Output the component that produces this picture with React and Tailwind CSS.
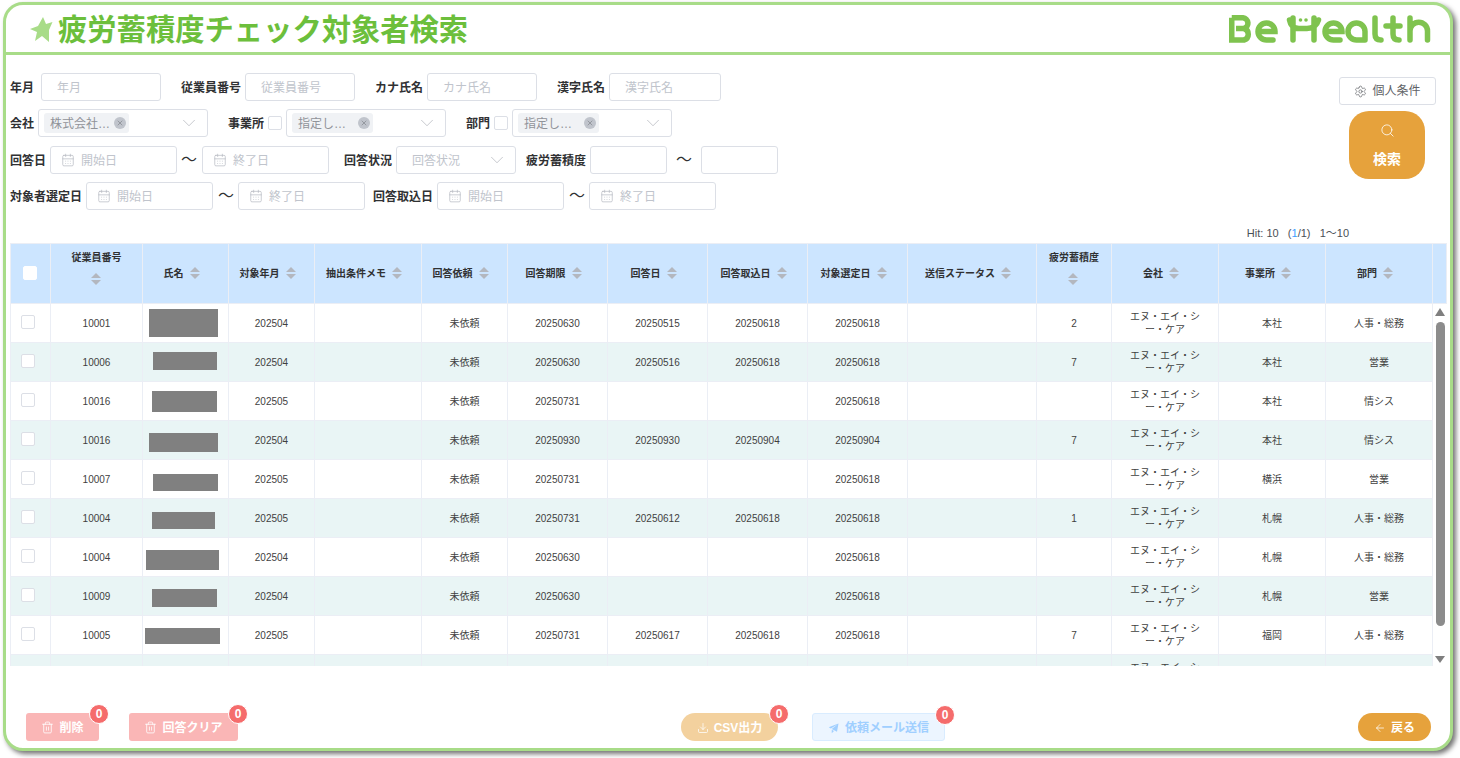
import { ArrowLeft, CalendarDays, ChevronDown, Download, Search, Settings, Trash2, X } from "lucide-react";

const cols = [
  { w: "w-[41px]" },
  { w: "w-[92px]", label: "従業員番号", stack: true },
  { w: "w-[86px]", label: "氏名" },
  { w: "w-[86px]", label: "対象年月" },
  { w: "w-[107px]", label: "抽出条件メモ" },
  { w: "w-[86px]", label: "回答依頼" },
  { w: "w-[100px]", label: "回答期限" },
  { w: "w-[100px]", label: "回答日" },
  { w: "w-[100px]", label: "回答取込日" },
  { w: "w-[100px]", label: "対象選定日" },
  { w: "w-[129px]", label: "送信ステータス" },
  { w: "w-[75px]", label: "疲労蓄積度", stack: true },
  { w: "w-[107px]", label: "会社" },
  { w: "w-[107px]", label: "事業所" },
  { w: "w-[107px]", label: "部門" },
];

// name cells are blacked out in the source, so each block keeps its own size
const rows = [
  { id: "10001", mask: "w-[69px] h-[28px] -translate-x-[2px]", ym: "202504", limit: "20250630", ans: "20250515", imp: "20250618", sel: "20250618", score: "2", office: "本社", dept: "人事・総務" },
  { id: "10006", mask: "w-[64px] h-[18px] -translate-x-[1px] -translate-y-[1px]", ym: "202504", limit: "20250630", ans: "20250516", imp: "20250618", sel: "20250618", score: "7", office: "本社", dept: "営業" },
  { id: "10016", mask: "w-[65px] h-[21px] -translate-x-[1px] translate-y-[1px]", ym: "202505", limit: "20250731", ans: "", imp: "", sel: "20250618", score: "", office: "本社", dept: "情シス" },
  { id: "10016", mask: "w-[69px] h-[19px] -translate-x-[2px] translate-y-[3px]", ym: "202504", limit: "20250930", ans: "20250930", imp: "20250904", sel: "20250904", score: "7", office: "本社", dept: "情シス" },
  { id: "10007", mask: "w-[65px] h-[17px] translate-y-[4px]", ym: "202505", limit: "20250731", ans: "", imp: "", sel: "20250618", score: "", office: "横浜", dept: "営業" },
  { id: "10004", mask: "w-[63px] h-[17px] -translate-x-[2px] translate-y-[3px]", ym: "202505", limit: "20250731", ans: "20250612", imp: "20250618", sel: "20250618", score: "1", office: "札幌", dept: "人事・総務" },
  { id: "10004", mask: "w-[73px] h-[20px] -translate-x-[3px] translate-y-[3px]", ym: "202504", limit: "20250630", ans: "", imp: "", sel: "20250618", score: "", office: "札幌", dept: "人事・総務" },
  { id: "10009", mask: "w-[65px] h-[18px] -translate-x-[1px] translate-y-[2px]", ym: "202504", limit: "20250630", ans: "", imp: "", sel: "20250618", score: "", office: "札幌", dept: "営業" },
  { id: "10005", mask: "w-[75px] h-[16px] -translate-x-[3px] translate-y-[1px]", ym: "202505", limit: "20250731", ans: "20250617", imp: "20250618", sel: "20250618", score: "7", office: "福岡", dept: "人事・総務" },
  { id: "", mask: "", ym: "", limit: "", ans: "", imp: "", sel: "", score: "", office: "", dept: "", clipped: true },
];

const fieldBox = "flex items-center h-7 bg-white border border-[#dcdfe6] rounded-[3px] text-xs text-[#c0c4cc]";

function Label({ className = "", children }) {
  return <span className={`pt-[2px] text-xs font-bold text-[#303133] whitespace-nowrap ${className}`}>{children}</span>;
}

function TextField({ className = "", placeholder = "" }) {
  return (
    <input
      placeholder={placeholder}
      className={`h-7 px-[15px] pt-[2px] bg-white border border-[#dcdfe6] rounded-[3px] text-xs outline-none placeholder:text-[#c0c4cc] ${className}`}
    />
  );
}

function DateField({ className = "", placeholder }) {
  return (
    <div className={`${fieldBox} w-[127px] pl-[10px] ${className}`}>
      <CalendarDays size={14} strokeWidth={1.2} className="text-[#b4b8c0]" />
      <span className="ml-[6px] pt-[2px]">{placeholder}</span>
    </div>
  );
}

function Tilde({ className = "" }) {
  return <span className={`w-4 text-base leading-none text-[#303133] ${className}`}>〜</span>;
}

function CheckBox({ className = "" }) {
  return <span className={`block w-[14px] h-[14px] bg-white border border-[#dcdfe6] rounded-[2px] ${className}`} />;
}

function SelectField({ className = "", tag, tagWidth = "w-[85px]", placeholder }) {
  return (
    <div className={`${fieldBox} justify-between pl-[5px] pr-[7px] ${className}`}>
      {tag ? (
        <span className={`flex items-center justify-between h-5 pl-[6px] pr-[2px] bg-[#f0f2f5] rounded-[3px] text-[#909399] ${tagWidth}`}>
          <span className="pt-[2px]">{tag}</span>
          <span className="flex items-center justify-center w-3 h-3 mr-[1px] rounded-full bg-[#c0c4cc]">
            <X size={8} strokeWidth={1.5} className="text-[#6b6e75]" />
          </span>
        </span>
      ) : (
        <span className="pl-[10px] pt-[2px]">{placeholder}</span>
      )}
      <ChevronDown size={22} strokeWidth={0.7} className="text-[#a8abb2]" />
    </div>
  );
}

function SortCaret() {
  return (
    <span className="flex flex-col items-center justify-center gap-[2px] w-6 pr-[2px]">
      <span className="w-0 h-0 border-x-[5px] border-x-transparent border-b-[5px] border-b-[#b3b7bf]" />
      <span className="w-0 h-0 border-x-[5px] border-x-transparent border-t-[5px] border-t-[#b3b7bf]" />
    </span>
  );
}

function Badge({ className = "-right-[10px]" }) {
  return (
    <span className={`absolute -top-[9px] flex items-center justify-center w-5 h-5 rounded-full bg-[#f56c6c] border border-white text-xs font-bold text-white ${className}`}>
      0
    </span>
  );
}

function Logo() {
  return (
    <svg viewBox="0 0 202 28" className="w-[202px] h-7" fill="none" stroke="#7fc34f" strokeWidth="5.5">
      <path d="M2.75 2.75V25H15A6 6 0 0 0 15 13.5H7M15 13.5A5.5 5.5 0 0 0 14 2.75H2.75" />
      <g strokeLinecap="round">
        <path d="M29 16.5H46A8.5 8.5 0 1 0 37.5 25H44" />
        <path d="M60.5 5Q62 13.5 70 13.5H78Q87 13.5 89.5 5M64 3V25M85 3V25" />
        <path d="M96 16.5H113A8.5 8.5 0 1 0 104.5 25H111" />
        <path d="M136 25V16.5A8.5 8.5 0 1 0 127.5 25H136" />
        <path d="M146 3V19Q146 25 152 25" />
        <path d="M164 3V19Q164 25 170 25M157 11H171" />
        <path d="M181 3V25M181 16A8.5 8.5 0 0 1 198.5 16V25" />
      </g>
      <circle cx="71.5" cy="5" r="1.8" fill="#7fc34f" stroke="none" />
      <circle cx="77" cy="5" r="1.8" fill="#7fc34f" stroke="none" />
    </svg>
  );
}

function PlaneIcon() {
  return (
    <svg viewBox="0 0 1024 1024" className="w-3 h-3" fill="currentColor">
      <path d="m64 448 832-320-128 704-446.08-243.328L832 192 242.816 545.472zm256 512V657.024L512 768z" />
    </svg>
  );
}

function ColGroup({ gutter }) {
  return (
    <colgroup>
      {cols.map((c, i) => (
        <col key={i} className={c.w} />
      ))}
      {gutter && <col className="w-[14px]" />}
    </colgroup>
  );
}

function TableHead() {
  return (
    <table className="table-fixed border-separate border-spacing-0 w-[1437px]">
      <ColGroup gutter />
      <thead>
        <tr>
          {cols.map((c, i) => (
            <th key={i} className="h-[61px] p-0 bg-[#cce5ff] border-r border-y border-[#ebeef5] first:border-l text-[10px] font-bold text-[#303133]">
              {i === 0 ? (
                <CheckBox className="mx-auto -translate-x-[1px] border-white" />
              ) : (
                <div className={`flex items-center justify-center ${c.stack ? "flex-col gap-2 pb-3" : ""}`}>
                  <span className="whitespace-nowrap">{c.label}</span>
                  <SortCaret />
                </div>
              )}
            </th>
          ))}
          <th className="bg-[#cce5ff] border-r border-y border-[#ebeef5]" />
        </tr>
      </thead>
    </table>
  );
}

function Cell({ children, className = "pt-[2px]" }) {
  return <td className={`h-[39px] p-0 border-r border-b border-[#ebeef5] first:border-l text-center text-[10px] text-[#3f3f3f] ${className}`}>{children}</td>;
}

function TableBody() {
  return (
    <div className="flex">
      <div className="w-[1423px] h-[362px] overflow-hidden">
        <table className="table-fixed border-separate border-spacing-0 w-[1423px]">
          <ColGroup />
          <tbody>
            {rows.map((r, i) => (
              <tr key={i} className={i % 2 === 1 ? "bg-[#e9f5f5]" : "bg-white"}>
                <Cell className="">{!r.clipped && <CheckBox className="ml-[10px] -translate-y-[1px]" />}</Cell>
                <Cell>{r.id}</Cell>
                <Cell className="">{r.mask && <span className={`block mx-auto bg-[#808080] ${r.mask}`} />}</Cell>
                <Cell>{r.ym}</Cell>
                <Cell />
                <Cell>{r.clipped ? "" : "未依頼"}</Cell>
                <Cell>{r.limit}</Cell>
                <Cell>{r.ans}</Cell>
                <Cell>{r.imp}</Cell>
                <Cell>{r.sel}</Cell>
                <Cell />
                <Cell>{r.score}</Cell>
                <Cell className="leading-[13px]">
                  エヌ・エイ・シ
                  <br />
                  ー・ケア
                </Cell>
                <Cell>{r.office}</Cell>
                <Cell>{r.dept}</Cell>
              </tr>
            ))}
          </tbody>
        </table>
      </div>
      <div className="flex flex-col items-center w-[14px] h-[362px] pt-1 bg-white">
        <span className="w-0 h-0 border-x-[5px] border-x-transparent border-b-[8px] border-b-[#7f7f7f]" />
        <span className="w-[9px] h-[304px] mt-[6px] rounded-full bg-[#8c8c8c]" />
        <span className="w-0 h-0 mt-[30px] border-x-[5px] border-x-transparent border-t-[7px] border-t-[#7f7f7f]" />
      </div>
    </div>
  );
}

export default function App() {
  return (
    <div className="w-[1460px] h-[758px] bg-white pt-[2px] pl-[3px] overflow-hidden font-['Liberation_Sans','Noto_Sans_CJK_JP',sans-serif]">
      <div className="flex flex-col w-[1450px] h-[749px] bg-white border-[3px] border-[#a8dc88] rounded-[20px] shadow-[3px_3px_5px_rgba(0,0,0,0.55)]">
        <header className="flex items-center justify-between shrink-0 h-[50px] pl-[24px] pr-[19px] border-b-[3px] border-[#a8dc88]">
          <div className="flex items-center gap-[5px]">
            <svg viewBox="0 0 23 25" className="w-[23px] h-[25px] mt-[3px]" fill="#a8dc88">
              <path d="M13 0L16 7L22.5 5L19 13L19 25L12 19L5 24L7 15L0 12L8 9Z" />
            </svg>
            <h1 className="pt-[2px] text-[29.3px] leading-none font-bold text-[#6cbf3c]">疲労蓄積度チェック対象者検索</h1>
          </div>
          <Logo />
        </header>

        <div className="flex pl-[4px] pt-[18px] pr-[14px]">
          <div className="flex flex-col gap-[8.33px]">
            <div className="flex items-center h-7">
              <Label>年月</Label>
              <TextField className="ml-[7px] w-[120px]" placeholder="年月" />
              <Label className="ml-5">従業員番号</Label>
              <TextField className="ml-1 w-[110px]" placeholder="従業員番号" />
              <Label className="ml-5">カナ氏名</Label>
              <TextField className="ml-1 w-[110px]" placeholder="カナ氏名" />
              <Label className="ml-5">漢字氏名</Label>
              <TextField className="ml-1 w-[112px]" placeholder="漢字氏名" />
            </div>
            <div className="flex items-center h-7">
              <Label>会社</Label>
              <SelectField className="ml-1 w-[170px]" tag="株式会社…" />
              <Label className="ml-5">事業所</Label>
              <CheckBox className="ml-1" />
              <SelectField className="ml-1 w-[160px]" tag="指定し…" tagWidth="w-[81px]" />
              <Label className="ml-5">部門</Label>
              <CheckBox className="ml-1" />
              <SelectField className="ml-1 w-[160px]" tag="指定し…" tagWidth="w-[81px]" />
            </div>
            <div className="flex items-center h-7">
              <Label>回答日</Label>
              <DateField className="ml-1" placeholder="開始日" />
              <Tilde className="ml-1" />
              <DateField className="ml-[5px]" placeholder="終了日" />
              <Label className="ml-[15px]">回答状況</Label>
              <SelectField className="ml-1 w-[120px]" placeholder="回答状況" />
              <Label className="ml-[10px]">疲労蓄積度</Label>
              <TextField className="ml-1 w-[77px]" />
              <Tilde className="ml-[9px]" />
              <TextField className="ml-[9px] w-[77px]" />
            </div>
            <div className="flex items-center h-7">
              <Label>対象者選定日</Label>
              <DateField className="ml-1" placeholder="開始日" />
              <Tilde className="ml-[5px]" />
              <DateField className="ml-1" placeholder="終了日" />
              <Label className="ml-2">回答取込日</Label>
              <DateField className="ml-1" placeholder="開始日" />
              <Tilde className="ml-[5px]" />
              <DateField className="ml-1" placeholder="終了日" />
            </div>
          </div>

          <div className="flex flex-col items-end gap-[6px] ml-auto mt-1">
            <button className="flex items-center justify-center gap-[5px] w-[97px] h-7 bg-white border border-[#dcdfe6] rounded-[3px] text-xs text-[#606266]">
              <Settings size={13} strokeWidth={1.3} />
              個人条件
            </button>
            <button className="flex flex-col items-center justify-center gap-[11px] w-[76px] h-[68px] mr-[11px] pt-[1px] bg-[#e6a23c] rounded-[20px] text-sm font-bold text-white">
              <Search size={15} strokeWidth={1.3} />
              検索
            </button>
          </div>
        </div>

        <div className="flex justify-end items-center h-[33px] pt-[13px] pr-[101px] text-[11px] text-[#4a4f57] whitespace-pre">
          Hit: 10{"   "}(<span className="text-[#409eff]">1</span>/1){"   "}1〜10
        </div>

        <div className="pl-[4px]">
          <TableHead />
          <TableBody />
        </div>

        <div className="flex items-center mt-[47px] pl-5 pr-[19px]">
          <button className="relative flex items-center justify-center gap-[5px] w-[73px] h-7 pt-[2px] bg-[#fab6b6] rounded-[3px] text-xs font-bold text-white">
            <Trash2 size={13} strokeWidth={1.5} />
            削除
            <Badge />
          </button>
          <button className="relative flex items-center justify-center gap-[5px] w-[109px] h-7 ml-[30px] pt-[2px] bg-[#fab6b6] rounded-[3px] text-xs font-bold text-white">
            <Trash2 size={13} strokeWidth={1.5} />
            回答クリア
            <Badge />
          </button>
          <button className="relative flex items-center justify-center gap-[5px] w-[97px] h-7 ml-[443px] pt-[2px] bg-[#f3d19e] rounded-[14px] text-xs font-bold text-white">
            <Download size={12} strokeWidth={1.5} />
            CSV出力
            <Badge className="-right-[11px]" />
          </button>
          <button className="relative flex items-center justify-center gap-[5px] w-[133px] h-7 ml-[34px] pt-[2px] bg-[#ecf5ff] border border-[#d9ecff] rounded-[3px] text-xs font-bold text-[#a0cfff]">
            <PlaneIcon />
            依頼メール送信
            <Badge className="-right-[11px]" />
          </button>
          <button className="flex items-center justify-center gap-[5px] w-[73px] h-7 ml-auto pt-[2px] bg-[#e6a23c] rounded-[14px] text-xs font-bold text-white">
            <ArrowLeft size={12} strokeWidth={1.5} />
            戻る
          </button>
        </div>
      </div>
    </div>
  );
}
